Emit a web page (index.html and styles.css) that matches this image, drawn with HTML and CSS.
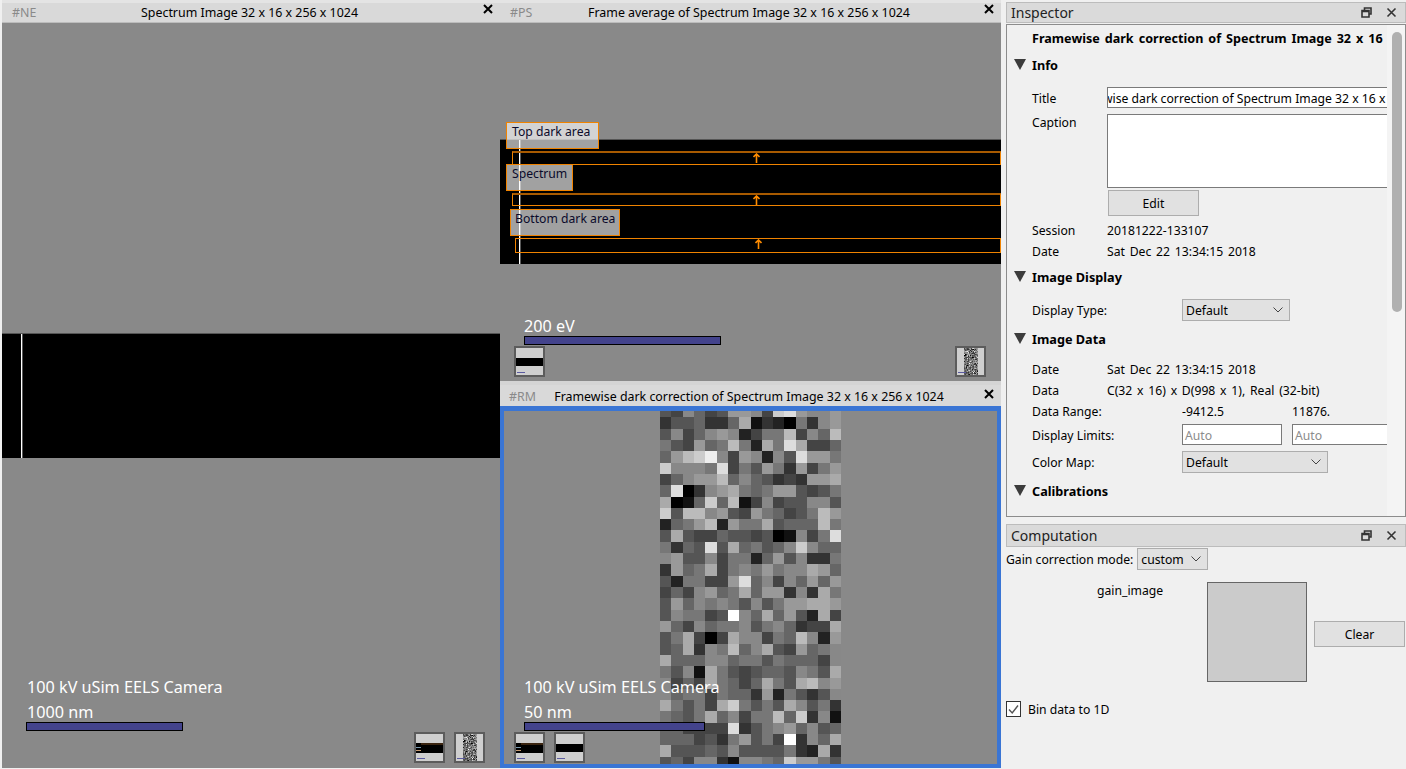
FILE: index.html
```html
<!DOCTYPE html>
<html lang="en">
<head>
    <meta charset="UTF-8">
    <title>Nion Swift</title>
    <link rel="stylesheet" href="styles.css">
</head>
<body>
    <div class="workspace">
        <div class="pane pane-left">
            <div class="title-bar">
                <span class="pane-id">#NE</span>
                <span class="pane-title">Spectrum Image 32 x 16 x 256 x 1024</span>
                <svg class="pane-close" width="10" height="10" viewBox="0 0 10 10"><path d="M1 1L9 9M9 1L1 9"/></svg>
            </div>
            <div class="canvas">
                <div class="band"><div class="marker"></div></div>
                <div class="caption caption-left">
                    <div class="caption-text">100 kV uSim EELS Camera</div>
                    <div class="caption-text">1000 nm</div>
                    <div class="scale-bar scale-1000nm"></div>
                </div>
                <div class="thumbs thumbs-left">
                    <div class="thumb thumb-band thumb-marked"><i class="tick"></i></div>
                    <div class="thumb thumb-noise" data-noise><i class="tick"></i></div>
                </div>
            </div>
        </div>

        <div class="pane-stack">
            <div class="pane pane-top">
                <div class="title-bar">
                    <span class="pane-id">#PS</span>
                    <span class="pane-title">Frame average of Spectrum Image 32 x 16 x 256 x 1024</span>
                    <svg class="pane-close" width="10" height="10" viewBox="0 0 10 10"><path d="M1 1L9 9M9 1L1 9"/></svg>
                </div>
                <div class="canvas">
                    <div class="band">
                        <div class="marker"></div>
                        <div class="region region-top"><svg class="arrow" width="7" height="10" viewBox="0 0 7 10"><path d="M3.5 10V1M0.5 4L3.5 1L6.5 4"/></svg></div>
                        <div class="region region-spectrum"><svg class="arrow" width="7" height="10" viewBox="0 0 7 10"><path d="M3.5 10V1M0.5 4L3.5 1L6.5 4"/></svg></div>
                        <div class="region region-bottom"><svg class="arrow" width="7" height="10" viewBox="0 0 7 10"><path d="M3.5 10V1M0.5 4L3.5 1L6.5 4"/></svg></div>
                        <div class="region-label label-top">Top dark area</div>
                        <div class="region-label label-spectrum">Spectrum</div>
                        <div class="region-label label-bottom">Bottom dark area</div>
                    </div>
                    <div class="caption caption-top">
                        <div class="caption-text">200 eV</div>
                        <div class="scale-bar scale-200ev"></div>
                    </div>
                    <div class="thumbs thumbs-top-a">
                        <div class="thumb thumb-band"><i class="tick"></i></div>
                    </div>
                    <div class="thumbs thumbs-top-b">
                        <div class="thumb thumb-noise" data-noise><i class="tick"></i></div>
                    </div>
                </div>
            </div>
            <div class="splitter"></div>
            <div class="pane pane-bottom">
                <div class="title-bar">
                    <span class="pane-id">#RM</span>
                    <span class="pane-title">Framewise dark correction of Spectrum Image 32 x 16 x 256 x 1024</span>
                    <svg class="pane-close" width="10" height="10" viewBox="0 0 10 10"><path d="M1 1L9 9M9 1L1 9"/></svg>
                </div>
                <div class="canvas canvas-selected">
                    <div class="heatmap" id="heatmap"></div>
                    <div class="caption caption-bottom">
                        <div class="caption-text">100 kV uSim EELS Camera</div>
                        <div class="caption-text">50 nm</div>
                        <div class="scale-bar scale-50nm"></div>
                    </div>
                    <div class="thumbs thumbs-bottom">
                        <div class="thumb thumb-band thumb-marked"><i class="tick"></i></div>
                        <div class="thumb thumb-band"><i class="tick"></i></div>
                    </div>
                </div>
            </div>
        </div>
    </div>

    <div class="sidebar">
        <div class="dock-header">
            <span class="dock-title">Inspector</span>
            <svg class="dock-icon" width="11" height="11" viewBox="0 0 11 11"><path d="M3.5 3V1H10V7H8M1 3.5H8V10H1ZM1 4.5H8"/></svg>
            <svg class="dock-icon" width="11" height="11" viewBox="0 0 11 11"><path d="M1.5 1.5L9.5 9.5M9.5 1.5L1.5 9.5"/></svg>
        </div>
        <div class="inspector">
            <div class="inspector-content">
                <div class="doc-title">Framewise dark correction of Spectrum Image 32 x 16 x 256 x 1024</div>

                <div class="section-head"><i class="triangle"></i>Info</div>
                <div class="row row-title">
                    <span class="label">Title</span>
                    <div class="field field-title"><span>Framewise dark correction of Spectrum Image 32 x 16 x 256 x 1024</span></div>
                </div>
                <div class="row row-caption">
                    <span class="label">Caption</span>
                    <div class="field field-caption"></div>
                </div>
                <button class="btn btn-edit">Edit</button>
                <div class="row row-session"><span class="label">Session</span><span>20181222-133107</span></div>
                <div class="row"><span class="label">Date</span><span class="value">Sat Dec 22 13:34:15 2018</span></div>

                <div class="section-head head-display"><i class="triangle"></i>Image Display</div>
                <div class="row row-display">
                    <span class="label label-wide">Display Type:</span>
                    <div class="select select-type">Default<svg width="10" height="6" viewBox="0 0 10 6"><path d="M0.5 0.5L5 5L9.5 0.5"/></svg></div>
                </div>

                <div class="section-head head-data"><i class="triangle"></i>Image Data</div>
                <div class="row row-date"><span class="label">Date</span><span class="value">Sat Dec 22 13:34:15 2018</span></div>
                <div class="row"><span class="label">Data</span><span class="value">C(32 x 16) x D(998 x 1), Real (32-bit)</span></div>
                <div class="row">
                    <span class="label label-wide">Data Range:</span>
                    <span class="range-value">-9412.5</span><span>11876.</span>
                </div>
                <div class="row row-limits">
                    <span class="label label-wide">Display Limits:</span>
                    <div class="field field-limit">Auto</div>
                    <div class="field field-limit field-limit-max">Auto</div>
                </div>
                <div class="row row-map">
                    <span class="label label-wide">Color Map:</span>
                    <div class="select select-map">Default<svg width="10" height="6" viewBox="0 0 10 6"><path d="M0.5 0.5L5 5L9.5 0.5"/></svg></div>
                </div>

                <div class="section-head head-calib"><i class="triangle"></i>Calibrations</div>
            </div>
            <div class="scrollbar"><div class="scroll-thumb"></div></div>
        </div>

        <div class="dock-header dock-computation">
            <span class="dock-title">Computation</span>
            <svg class="dock-icon" width="11" height="11" viewBox="0 0 11 11"><path d="M3.5 3V1H10V7H8M1 3.5H8V10H1ZM1 4.5H8"/></svg>
            <svg class="dock-icon" width="11" height="11" viewBox="0 0 11 11"><path d="M1.5 1.5L9.5 9.5M9.5 1.5L1.5 9.5"/></svg>
        </div>
        <div class="computation">
            <div class="gain-mode">
                <span>Gain correction mode:</span>
                <div class="select select-gain">custom<svg width="10" height="6" viewBox="0 0 10 6"><path d="M0.5 0.5L5 5L9.5 0.5"/></svg></div>
            </div>
            <div class="gain-row">
                <span class="gain-label">gain_image</span>
                <div class="gain-well"></div>
                <button class="btn btn-clear">Clear</button>
            </div>
            <div class="check-row">
                <span class="checkbox"><svg width="13" height="13" viewBox="0 0 13 13"><path d="M2 6.5L5.2 10L11 2.5"/></svg></span>
                <span>Bin data to 1D</span>
            </div>
        </div>
    </div>

    <script src="heatmap.js"></script>
</body>
</html>
```

FILE: styles.css
```css
* {
    box-sizing: border-box;
}

html, body {
    margin: 0;
    padding: 0;
    width: 1406px;
    height: 769px;
    overflow: hidden;
}

body {
    display: flex;
    background: #f0f0f0;
    color: #000;
    font-family: "Noto Sans", "Liberation Sans", sans-serif;
    font-size: 12.2px;
}

/* workspace panes */
.workspace {
    display: flex;
    width: 1006px;
    height: 768px;
    padding-left: 2px;
    flex-shrink: 0;
}

.pane {
    display: flex;
    flex-direction: column;
}

.pane-left {
    width: 498px;
    height: 768px;
}

.pane-stack {
    display: flex;
    flex-direction: column;
    width: 501px;
    height: 768px;
}

.pane-top {
    height: 381px;
}

.splitter {
    height: 4px;
    background: #d4d4d4;
}

.pane-bottom {
    height: 383px;
}

.title-bar {
    position: relative;
    display: flex;
    justify-content: center;
    align-items: center;
    height: 23px;
    padding-right: 3px;
    flex-shrink: 0;
    background: #d9d9d9;
    border-top: 3px solid #e4e4e4;
    border-bottom: 1px solid #bcbcbc;
    font-size: 12.4px;
}

.pane-bottom .title-bar {
    height: 21px;
    padding-top: 2px;
    border-top: 0;
    border-bottom: 0;
}

.pane-id {
    position: absolute;
    left: 10px;
    top: 1px;
    color: #8a8a8a;
}

.pane-bottom .pane-id {
    left: 9px;
    top: 3px;
}

.pane-close {
    position: absolute;
    right: 7px;
    top: 1px;
}

.pane-bottom .pane-close {
    top: 4px;
}

.pane-close path {
    fill: none;
    stroke: #000;
    stroke-width: 2;
}

.canvas {
    position: relative;
    flex: 1;
    display: flex;
    align-items: center;
    justify-content: center;
    background: #898989;
    overflow: hidden;
}

.canvas-selected::after {
    content: "";
    position: absolute;
    top: 0;
    left: 0;
    right: 0;
    bottom: 0;
    border: 4px solid #3a75d4;
    border-top-width: 5px;
}

.band {
    position: relative;
    width: 100%;
    height: 125px;
    margin-bottom: 2px;
    background: #000;
    border-top: 1px solid #555;
}

.pane-left .band {
    margin-bottom: 1px;
}

.marker {
    position: absolute;
    top: 0;
    bottom: 0;
    left: 19px;
    width: 1px;
    background: #fff;
    box-shadow: 1px 0 0 rgba(255, 255, 255, 0.35);
}

/* regions on the frame average */
.region {
    position: absolute;
    left: 12px;
    right: 0;
    border: 1px solid #f08300;
    border-top: 2px solid #a85a00;
}

.region-top {
    top: 11px;
    height: 14px;
}

.region-spectrum {
    top: 53px;
    height: 13px;
}

.region-bottom {
    left: 15px;
    top: 98px;
    height: 15px;
    border-top: 1px solid #f08300;
}

.arrow {
    position: absolute;
    left: 240px;
    top: 0;
}

.region-bottom .arrow {
    left: 239px;
}

.arrow path {
    fill: none;
    stroke: #ff8c00;
    stroke-width: 1.6;
}

.region-label {
    position: absolute;
    height: 27px;
    padding-left: 5px;
    background: rgba(255, 255, 255, 0.63);
    border: 1.5px solid #f08300;
    color: #0a0a2a;
    white-space: nowrap;
}

.label-top {
    left: 6px;
    top: -18px;
    width: 93px;
}

.label-spectrum {
    left: 6px;
    top: 24px;
    width: 67px;
}

.label-bottom {
    left: 10px;
    top: 69px;
    width: 110px;
    padding-left: 4px;
}

/* captions and scale bars */
.caption {
    position: absolute;
    left: 24px;
    bottom: 37px;
    color: #fff;
    z-index: 1;
}

.caption-text {
    padding-left: 1px;
    font-size: 16.2px;
    line-height: 25px;
    white-space: nowrap;
}

.caption-top {
    bottom: 36px;
}

.caption-top .caption-text,
.caption-bottom .caption-text {
    padding-left: 0;
}

.scale-bar {
    height: 9px;
    margin-top: -3px;
    background: #43438c;
    border: 1px solid #000;
}

.scale-1000nm {
    width: 157px;
}

.scale-200ev {
    width: 197px;
}

.scale-50nm {
    width: 181px;
}

/* little previews */
.thumbs {
    position: absolute;
    display: flex;
    gap: 9px;
    bottom: 5px;
    z-index: 1;
}

.thumbs-left {
    right: 15px;
}

.thumbs-top-a {
    left: 14px;
    bottom: 4px;
}

.thumbs-top-b {
    right: 15px;
    bottom: 4px;
}

.thumbs-bottom {
    left: 14px;
}

.thumb {
    position: relative;
    display: flex;
    align-items: center;
    justify-content: center;
    width: 31px;
    height: 31px;
    background: #cfcfcf;
    border: 2px solid #5c5c5c;
    overflow: hidden;
}

.thumb-band::before {
    content: "";
    width: 100%;
    height: 8px;
    background: #000;
}

/* the first frame keeps its coloured ticks at the left end */
.thumb-marked::before {
    height: 10px;
    background:
        linear-gradient(#000 4px, #7a9ab0 4px 5px, #000 5px 7px, #c89a70 7px 8px, #000 8px) left top / 5px 100% no-repeat,
        linear-gradient(#3a2410 2px, #000 2px);
}

.tick {
    position: absolute;
    left: 1px;
    bottom: 2px;
    width: 8px;
    height: 1px;
    background: #5a5aa0;
}

.noise-grid {
    display: grid;
    grid-template-columns: repeat(16, 1fr);
    width: 14px;
    height: 27px;
}

/* the big spectrum image */
.heatmap {
    display: grid;
    grid-template-columns: repeat(16, 1fr);
    grid-template-rows: repeat(32, 1fr);
    width: 181px;
    height: 362px;
    flex-shrink: 0;
}

/* right hand docks */
.sidebar {
    display: flex;
    flex-direction: column;
    width: 400px;
    height: 769px;
}

.dock-header {
    display: flex;
    align-items: center;
    gap: 14px;
    height: 21px;
    margin-top: 2px;
    padding: 0 8px 0 4px;
    background: #dadada;
    border: 1px solid #bcbcbc;
    flex-shrink: 0;
}

.dock-computation {
    height: 23px;
    margin-top: 7px;
}

.dock-title {
    flex: 1;
    font-size: 14px;
    color: #222;
}

.dock-icon path {
    fill: none;
    stroke: #333;
    stroke-width: 1.6;
}

.inspector {
    display: flex;
    height: 493px;
    margin-top: 1px;
    border: 1px solid #8c8c8c;
}

.inspector-content {
    width: 380px;
    flex-shrink: 0;
    overflow: hidden;
}

.scrollbar {
    flex: 1;
    padding: 7px 3px 0 5px;
    background: #f4f4f4;
}

.scroll-thumb {
    height: 280px;
    background: #b0b0b0;
    border-radius: 5px;
}

.doc-title {
    height: 28px;
    line-height: 28px;
    padding-left: 25px;
    font-size: 12.6px;
    font-weight: bold;
    word-spacing: 1.7px;
    white-space: nowrap;
}

.section-head {
    display: flex;
    align-items: center;
    gap: 6px;
    height: 24px;
    padding-left: 7px;
    font-size: 12.7px;
    font-weight: bold;
}

.head-display {
    margin-top: 3px;
}

.head-data,
.head-calib {
    margin-top: 6px;
}

.triangle {
    width: 0;
    height: 0;
    border-left: 6.5px solid transparent;
    border-right: 6.5px solid transparent;
    border-top: 11px solid #3c3c3c;
    margin-top: -2px;
}

.row {
    display: flex;
    align-items: center;
    height: 21px;
    padding-left: 25px;
    white-space: nowrap;
}

.label {
    width: 75px;
    flex-shrink: 0;
}

.label-wide {
    width: 150px;
}

.value {
    word-spacing: 1.6px;
}

.row-title {
    margin-top: 10px;
}

.row-title .label,
.row-limits .label {
    padding-top: 1px;
}

.row-caption {
    align-items: flex-start;
    height: 74px;
    margin-top: 6px;
}

.row-session {
    margin-top: 4px;
}

.row-display {
    height: 22px;
    margin-top: 10px;
}

.row-date {
    margin-top: 8px;
}

.row-limits {
    margin-top: 2px;
}

.row-map {
    height: 22px;
    margin-top: 6px;
}

.field {
    background: #fff;
    border: 1px solid #7a7a7a;
    flex-shrink: 0;
    overflow: hidden;
}

.field-title {
    width: 300px;
    height: 21px;
    line-height: 21px;
}

.field-title span {
    display: block;
    margin-left: -41px;
}

.field-caption {
    width: 300px;
    height: 74px;
}

.field-limit {
    width: 100px;
    height: 21px;
    line-height: 21px;
    padding-left: 2px;
    color: #8c8c8c;
}

.field-limit-max {
    margin-left: 10px;
}

.range-value {
    width: 110px;
}

.select {
    display: flex;
    align-items: center;
    justify-content: space-between;
    height: 22px;
    padding: 0 6px 0 3px;
    background: #e1e1e1;
    border: 1px solid #adadad;
}

.select svg path {
    fill: none;
    stroke: #444;
}

.select-type {
    width: 108px;
}

.select-map {
    width: 146px;
}

.select-gain {
    width: 71px;
    margin-left: 4px;
}

.btn {
    display: block;
    background: #e1e1e1;
    border: 1px solid #adadad;
    font: inherit;
    color: #000;
    padding: 0;
}

.btn-edit {
    width: 91px;
    height: 26px;
    margin: 2px 0 0 101px;
}

.computation {
    display: flex;
    flex-direction: column;
}

.gain-mode {
    display: flex;
    align-items: center;
    height: 22px;
    margin-top: 1px;
    white-space: nowrap;
}

.gain-row {
    display: flex;
    align-items: center;
    height: 100px;
    margin-top: 12px;
}

.gain-label {
    align-self: flex-start;
    width: 201px;
    padding-left: 91px;
}

.gain-well {
    width: 100px;
    height: 100px;
    background: #cbcbcb;
    border: 1px solid #666;
}

.btn-clear {
    width: 91px;
    height: 26px;
    margin: 4px 0 0 7px;
}

.check-row {
    display: flex;
    align-items: center;
    gap: 7px;
    height: 16px;
    margin-top: 19px;
}

.checkbox {
    display: flex;
    align-items: center;
    justify-content: center;
    width: 15px;
    height: 16px;
    background: #fff;
    border: 1px solid #333;
}

.checkbox path {
    fill: none;
    stroke: #555;
    stroke-width: 1.4;
}
```

FILE: heatmap.js
```js
// one hex digit per pixel, 16 x 32, read off as grey levels
var rows = [
    '5486459984cd9889',
    '3556336a13207389',
    '58468982477b486b',
    '754967b72a7da446',
    '69bce8498285d997',
    'c8887d4759739479',
    '46899b686534399a',
    '6d0389a767995457',
    'a016c6b148455885',
    'c5bb8954976457b9',
    '2679b2977a5666b7',
    '5a5446554501847d',
    '7365d5a67568c866',
    '8955847726958337',
    '3967a47879788a96',
    '5277449d68486969',
    '4648967a699383a7',
    '5968787585799aa9',
    '587745f86a6952a4',
    '964867785786344a',
    '57a404a88476b829',
    '56a387b68a549678',
    'a666886775766648',
    '7581a7545665875a',
    '8464a7646a75ab89',
    '8677476639275358',
    'a7574ac7575a8573',
    '7657a68477b6c381',
    '664444d357896856',
    '66645379574f386a',
    'a5556585555732a3',
    '56488318876c9975'
];

function cell(digit) {
    var grey = parseInt(digit, 16) * 17;
    var el = document.createElement('div');
    el.style.background = 'rgb(' + grey + ',' + grey + ',' + grey + ')';
    return el;
}

function fill(target) {
    rows.forEach(function (row) {
        row.split('').forEach(function (digit) {
            target.appendChild(cell(digit));
        });
    });
}

fill(document.getElementById('heatmap'));

document.querySelectorAll('[data-noise]').forEach(function (thumb) {
    var grid = document.createElement('div');
    grid.className = 'noise-grid';
    fill(grid);
    thumb.appendChild(grid);
});
```
